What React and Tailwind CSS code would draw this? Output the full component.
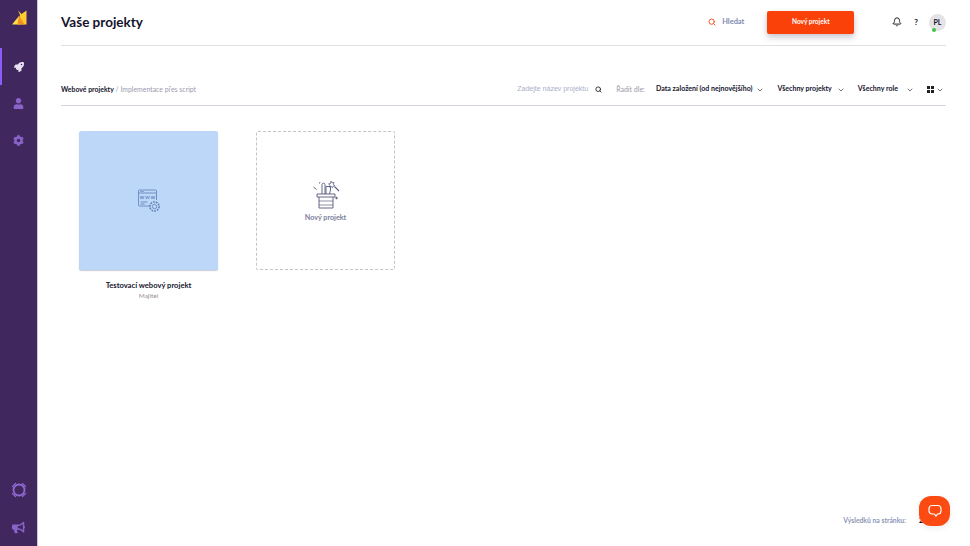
import React from "react";
import { Search, ChevronDown, Bell } from "lucide-react";
import { FaRocket, FaUser, FaCog, FaBullhorn } from "react-icons/fa";

const F = "[font-family:Lato,'Noto_Sans',sans-serif]";

function Filter({ children, className = "", chevron = "" }) {
  return (
    <div className={"flex items-center font-bold text-[7.05px] text-[#14142b] " + className}>
      <span>{children}</span>
      <ChevronDown className={"w-[8px] h-[8px] text-[#444] " + chevron} strokeWidth={2.2} />
    </div>
  );
}

function WwwIcon() {
  return (
    <svg width="24" height="24" viewBox="0 0 24 24" fill="none" stroke="#5f7fb5" strokeWidth="0.8">
      <path d="M13 17H2.500a1 1 0 0 1-1-1V2a1 1 0 0 1 1-1h16a1 1 0 0 1 1 1v9" />
      <path d="M1.500 4h18" />
      <path d="M3 2.500h4" strokeWidth="0.6" />
      <path d="M3 7l1 3 1-3 1 3 1-3M8.500 7l1 3 1-3 1 3 1-3M14 7l1 3 1-3 1 3 1-3" strokeWidth="0.6" />
      <path d="M3.500 13h7M3.500 15h4" />
      <circle cx="17.500" cy="17.500" r="2.200" />
      <circle cx="17.500" cy="17.500" r="4.600" strokeWidth="1.500" strokeDasharray="1.800 1" />
    </svg>
  );
}

function HatIcon() {
  return (
    <svg width="30" height="30" viewBox="0 0 30 30" fill="none" stroke="#5c6080" strokeWidth="0.95">
      <path d="M6 14h18v3H6z" />
      <path d="M8 17v11h14V17" />
      <path d="M8 21h14M8 25h14" strokeWidth="0.7" />
      <path d="M11 14V4.500c0-1.800 3-1.800 3 0V14" />
      <path d="M15 14V6.500h4.500V10l-1 4" />
      <path d="M2.500 7l3 2.500M9 2l-.5 1.500" />
      <path d="M20 1l1 1.800 2-.3-.6 2 1.500 1.300-2 .4-.4 1.500-1.400-1.200-1.500.7.300-2-1.300-1.400 2-.4z" strokeWidth="0.8" />
      <path d="M23.500 6.500l4.500 4.500" strokeWidth="1.100" />
      <circle cx="25.500" cy="18" r="0.800" fill="#5c6080" />
    </svg>
  );
}

function Logo() {
  return (
    <svg width="15" height="15" viewBox="0 0 15 15">
      <path d="M0 14.500 L7 6 L7 14.500 Z" fill="#ffdc50" />
      <path d="M6 0.500 L9.500 4 L14.500 0.500 L14.500 14.500 L6 14.500 L8 5 Z" fill="#ffcb2e" />
      <path d="M7 5.500 L12.500 14.500 L5.500 14.500 Z" fill="#f5911f" />
    </svg>
  );
}

function Ring() {
  return (
    <svg width="16" height="16" viewBox="0 0 16 16" fill="none" stroke="#8f68d0">
      <circle cx="8" cy="8" r="5.500" strokeWidth="1.800" />
      <path d="M1.500 4.500L4.500 1.500M11.500 1.500L14.500 4.500M14.500 11.500L11.500 14.500M4.500 14.500L1.500 11.500" strokeWidth="1.200" strokeLinecap="round" />
    </svg>
  );
}

export default function App() {
  return (
    <div className={"flex h-[546px] w-[970px] overflow-hidden bg-white relative " + F}>
      <aside className="w-[38px] shrink-0 bg-[#40285f] border-r border-r-[#cfc9dc] flex flex-col items-center text-[#8a63c9]">
        <div className="h-[48px] w-full flex items-start justify-center pt-[10px] pl-[2px]"><Logo /></div>
        <nav className="flex flex-col w-full">
          <div className="relative h-[37px] flex items-center justify-center">
            <span className="absolute left-0 top-0 h-[37px] w-[2px] bg-[#8b5cf6]" />
            <FaRocket className="w-[10px] h-[10px] text-[#e9e2f5]" />
          </div>
          <div className="h-[37px] flex items-center justify-center">
            <FaUser className="w-[11px] h-[11px]" />
          </div>
          <div className="h-[37px] flex items-center justify-center">
            <FaCog className="w-[11px] h-[11px]" />
          </div>
        </nav>
        <div className="mt-auto flex flex-col items-center gap-[23px] pb-[12px]">
          <Ring />
          <FaBullhorn className="w-[13px] h-[13px]" />
        </div>
      </aside>

      <main className="flex-1 flex flex-col pl-[23px] pr-[24px]">
        <header className="h-[46px] shrink-0 flex items-center border-b border-b-[#dfdfe6] pb-[1px]">
          <h1 className="text-[13.5px] font-bold text-[#14142b]">Vaše projekty</h1>
          <div className="ml-auto flex items-center">
            <Search className="w-[8px] h-[8px] text-[#f4562a]" strokeWidth={3} />
            <span className="ml-[6px] text-[7.4px] font-bold text-[#7d89b0]">Hledat</span>
            <button className="ml-[23px] w-[87px] h-[23px] rounded-[2px] bg-[#fa410a] text-white text-[6.5px] font-bold shadow-[0_3px_6px_rgba(60,60,90,0.3)]">Nový projekt</button>
            <Bell className="ml-[38px] w-[10px] h-[10px] text-[#222]" strokeWidth={2.4} />
            <span className="ml-[12px] text-[8px] font-bold text-[#14142b]">?</span>
            <div className="relative ml-[11px] w-[17px] h-[17px] rounded-full bg-[#e3e3e8] flex items-center justify-center text-[7px] font-bold text-[#14142b]">
              PL
              <span className="absolute left-[3px] bottom-[-1px] w-[4px] h-[4px] rounded-full bg-[#3fc24a]" />
            </div>
          </div>
        </header>

        <div className="mt-[33px] h-[27px] shrink-0 flex items-center border-b border-b-[#d5d5df] pb-[5px]">
          <div className="text-[6.9px]">
            <span className="font-bold text-[#14142b]">Webové projekty</span>
            <span className="text-[#9b9bb0]"> / Implementace přes script</span>
          </div>
          <div className="ml-auto flex items-center pr-[2px]">
            <span className="text-[7px] text-[#a9afc9] [font-family:'Liberation_Sans',sans-serif]">Zadejte název projektu</span>
            <Search className="ml-[7px] w-[7px] h-[7px] text-[#222]" strokeWidth={3} />
            <span className="ml-[14px] text-[7px] text-[#9a9aa8]">Řadit dle:</span>
            <Filter className="ml-[11px]" chevron="ml-[4px]">Data založení (od nejnovějšího)</Filter>
            <Filter className="ml-[13px]" chevron="ml-[5px]">Všechny projekty</Filter>
            <Filter className="ml-[13px]" chevron="ml-[8px]">Všechny role</Filter>
            <div className="ml-[13px] flex items-center">
              <div className="grid grid-cols-2 gap-[1px]">
                <span className="w-[3px] h-[3px] bg-[#222]" />
                <span className="w-[3px] h-[3px] bg-[#222]" />
                <span className="w-[3px] h-[3px] bg-[#222]" />
                <span className="w-[3px] h-[3px] bg-[#222]" />
              </div>
              <ChevronDown className="ml-[2px] w-[8px] h-[8px] text-[#444]" strokeWidth={2.2} />
            </div>
          </div>
        </div>

        <section className="mt-[25px] pl-[18px] flex gap-[38px]">
          <div className="w-[139px] flex flex-col items-center">
            <div className="w-[139px] h-[139px] bg-[#bdd7f8] rounded-[2px] shadow-[0_1px_1px_rgba(90,110,150,0.35)] flex items-center justify-center">
              <WwwIcon />
            </div>
            <div className="mt-[10px] text-[7.6px] font-bold text-[#14142b] leading-[10px]">Testovací webový projekt</div>
            <div className="mt-[1px] text-[6.5px] text-[#9b8f96] leading-[10px]">Majitel</div>
          </div>
          <div className="w-[139px] h-[139px] rounded-[2px] border border-dashed border-[#c4c4c8] flex flex-col items-center justify-center pt-[3px]">
            <HatIcon />
            <span className="mt-[3px] text-[7.2px] font-bold text-[#7c809c]">Nový projekt</span>
          </div>
        </section>

        <footer className="mt-auto h-[31px] flex items-start justify-end pr-[23px]">
          <span className="text-[6.8px] text-[#8d96b5] font-bold">Výsledků na stránku:</span>
          <span className="ml-[13px] text-[7px] text-[#14142b] font-bold">2</span>
        </footer>
      </main>

      <button className="absolute left-[919px] top-[496px] w-[31px] h-[30px] rounded-[12px] bg-[#fb4a12] flex items-center justify-center shadow-[0_2px_6px_rgba(0,0,0,0.08)]" aria-label="Chat">
        <svg width="16" height="16" viewBox="0 0 16 16" fill="none" stroke="#fff" strokeWidth="1.2">
          <path d="M5 2.500h6a3 3 0 0 1 3 3v2.500a3 3 0 0 1-3 3h-.5l-1.500 2.200-1.600-2.200H5a3 3 0 0 1-3-3V5.500a3 3 0 0 1 3-3z" strokeLinejoin="round" />
        </svg>
      </button>
    </div>
  );
}
